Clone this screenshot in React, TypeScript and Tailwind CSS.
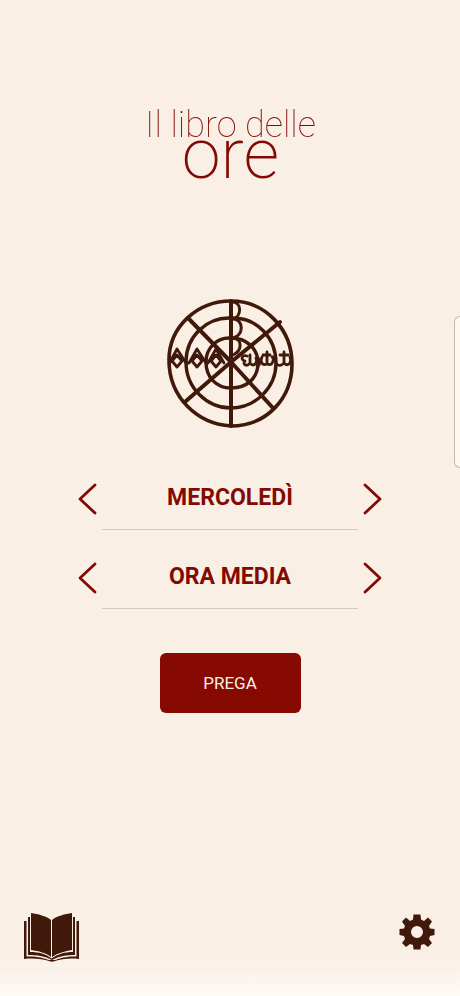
import { useState } from "react";

const days = ["DOMENICA", "LUNEDÌ", "MARTEDÌ", "MERCOLEDÌ", "GIOVEDÌ", "VENERDÌ", "SABATO"];
const hours = ["LODI", "ORA MEDIA", "VESPRI", "COMPIETA"];

function WheelEmblem() {
  return (
    <svg
      role="img"
      aria-label="Ruota delle ore"
      className="h-[132px] w-32"
      viewBox="0 0 128 132"
      fill="none"
      stroke="#40190a"
      strokeLinecap="round"
      strokeLinejoin="round"
    >
      <path
        strokeWidth="3.6"
        d="M65 4C31 4 3 30 3 63C3 101 32 127 65 129C100 129 126 102 126 67C126 32 99 4 65 4Z"
      />
      <path
        strokeWidth="3.4"
        d="M65 21C40 20 20 40 20 65C20 91 41 111 65 111C89 111 110 91 110 66C110 41 91 20 65 21Z"
      />
      <path
        strokeWidth="3.4"
        d="M65 41C51 40 40 51 40 65C40 80 50 91 65 91C81 91 92 81 92 66C92 51 80 41 65 41Z"
      />
      <path strokeWidth="4" d="M65 4V129" />
      <path strokeWidth="4" d="M22 21L65 65L107 111M114 25L65 65L20 104" />
      <path
        strokeWidth="3"
        d="M66 5C76 5 76 19 67 22C78 22 78 39 67 41C77 42 76 54 67 58"
      />
      <path
        strokeWidth="2.8"
        d="M3 67L11 52L20 66H23L31 52L40 66H42L50 52L58 66M11 58L6 64L11 70L16 64ZM31 58L26 64L31 70L36 64ZM50 58L45 64L50 70L55 64Z"
      />
      <path
        strokeWidth="2.8"
        d="M81 59C76 57 74 63 79 64C76 68 81 70 84 66V58M84 66C87 70 92 67 90 61C94 60 94 66 93 68M96 60C94 65 96 69 101 67V55M101 67C105 69 108 66 107 60M97 58H104M106 60C111 60 108 67 112 68C115 69 118 67 118 65V55M118 66C122 70 126 66 124 60M114 58H122"
      />
    </svg>
  );
}

function Chevron({ direction }: { direction: "left" | "right" }) {
  return (
    <svg
      aria-hidden="true"
      className="h-8 w-5"
      viewBox="0 0 20 32"
      fill="none"
      stroke="#830a04"
      strokeWidth="2.8"
      strokeLinecap="round"
      strokeLinejoin="round"
    >
      <path d={direction === "left" ? "M17 2L2 16L17 30" : "M3 2L18 16L3 30"} />
    </svg>
  );
}

function Picker({ label, items, initial }: { label: string; items: string[]; initial: number }) {
  const [index, setIndex] = useState(initial);
  const move = (step: number) => setIndex((index + step + items.length) % items.length);

  return (
    <div role="group" aria-label={label} className="flex h-[79px] justify-center">
      <button type="button" aria-label="Precedente" className="mt-8 h-8 w-5" onClick={() => move(-1)}>
        <Chevron direction="left" />
      </button>
      <div className="mx-1 flex w-64 flex-col items-center justify-end border-b border-[#d3c9c1] pb-[15px] text-[23px] leading-8 font-bold">
        <output>{items[index]}</output>
      </div>
      <button type="button" aria-label="Successivo" className="mt-8 h-8 w-5" onClick={() => move(1)}>
        <Chevron direction="right" />
      </button>
    </div>
  );
}

function BookIcon() {
  return (
    <svg aria-hidden="true" className="h-[50px] w-14" viewBox="0 0 56 50" fill="#40190a">
      <path d="M7 1C14 2 22 4 27 8V45C22 41 15 39 7 38Z" />
      <path d="M48 1C41 2 33 4 28 8V45C34 41 41 39 48 38Z" />
      <path d="M4 5H6V40C15 40 22 42 27.500 46.500C34 42 41 40 49 40V5H51V43C43 43 35 44 28 48C21 44 13 43 4 43Z" />
      <path d="M0 9H2.500V44.500C12 44 20 46 25 48H31C36 46 44 44 52.500 44.500V9H55V47C46 46 37 47 31 49C29 50 27 50 25 49C19 47 10 46 0 47Z" />
    </svg>
  );
}

function GearIcon() {
  return (
    <svg aria-hidden="true" className="size-9" viewBox="0 0 36 36" fill="#40190a">
      <path
        fillRule="evenodd"
        d="M14.500 .5H21.500L22 5.500L25 7L29 3.500L33 7.500L30 12L31 14.500L35.500 15V21L31 22L30 25L33 29L29 33L25 30L22 31L21.500 35.500H14.500L14 31L11 30L7 33L3 29L6 25L5 22L.5 21V15L5 14.500L6 12L3 7.500L7 3.500L11 7L14 5.500ZM18 12A6 6 0 1 0 18 24A6 6 0 1 0 18 12Z"
      />
    </svg>
  );
}

export default function App() {
  return (
    <div className="relative flex min-h-screen flex-col items-center overflow-hidden bg-[#f9efe5] bg-linear-to-t from-[#fdf9f5] via-[#f9efe5] via-4% to-[#f9efe5] font-[Roboto,sans-serif] text-[#830a04] antialiased">
      <h1 className="flex flex-col items-center pt-[107px] font-thin will-change-transform">
        <span className="text-4xl leading-9">Il libro delle</span>
        <span className="-mt-[17px] text-[70px] leading-[56px] font-extralight">ore</span>
      </h1>

      <main className="mt-[115px] flex w-full flex-col items-center">
        <WheelEmblem />
        <div className="mt-[22px] w-full">
          <Picker label="Giorno" items={days} initial={3} />
          <Picker label="Ora" items={hours} initial={1} />
        </div>
        <button
          type="button"
          className="mt-11 h-[60px] w-[141px] rounded-md bg-[#860a02] text-[17px] leading-6 text-[#f9efe5]"
        >
          PREGA
        </button>
      </main>

      <nav className="mt-auto flex w-full items-start justify-between pr-[25px] pb-[34px] pl-6">
        <button type="button" aria-label="Libro">
          <BookIcon />
        </button>
        <button type="button" aria-label="Impostazioni" className="pt-0.5">
          <GearIcon />
        </button>
      </nav>

      <div className="absolute top-[316px] right-0 h-[152px] w-1.5 rounded-l-md border border-r-0 border-[#c4bcae] bg-[#fff8ee]" />
    </div>
  );
}
